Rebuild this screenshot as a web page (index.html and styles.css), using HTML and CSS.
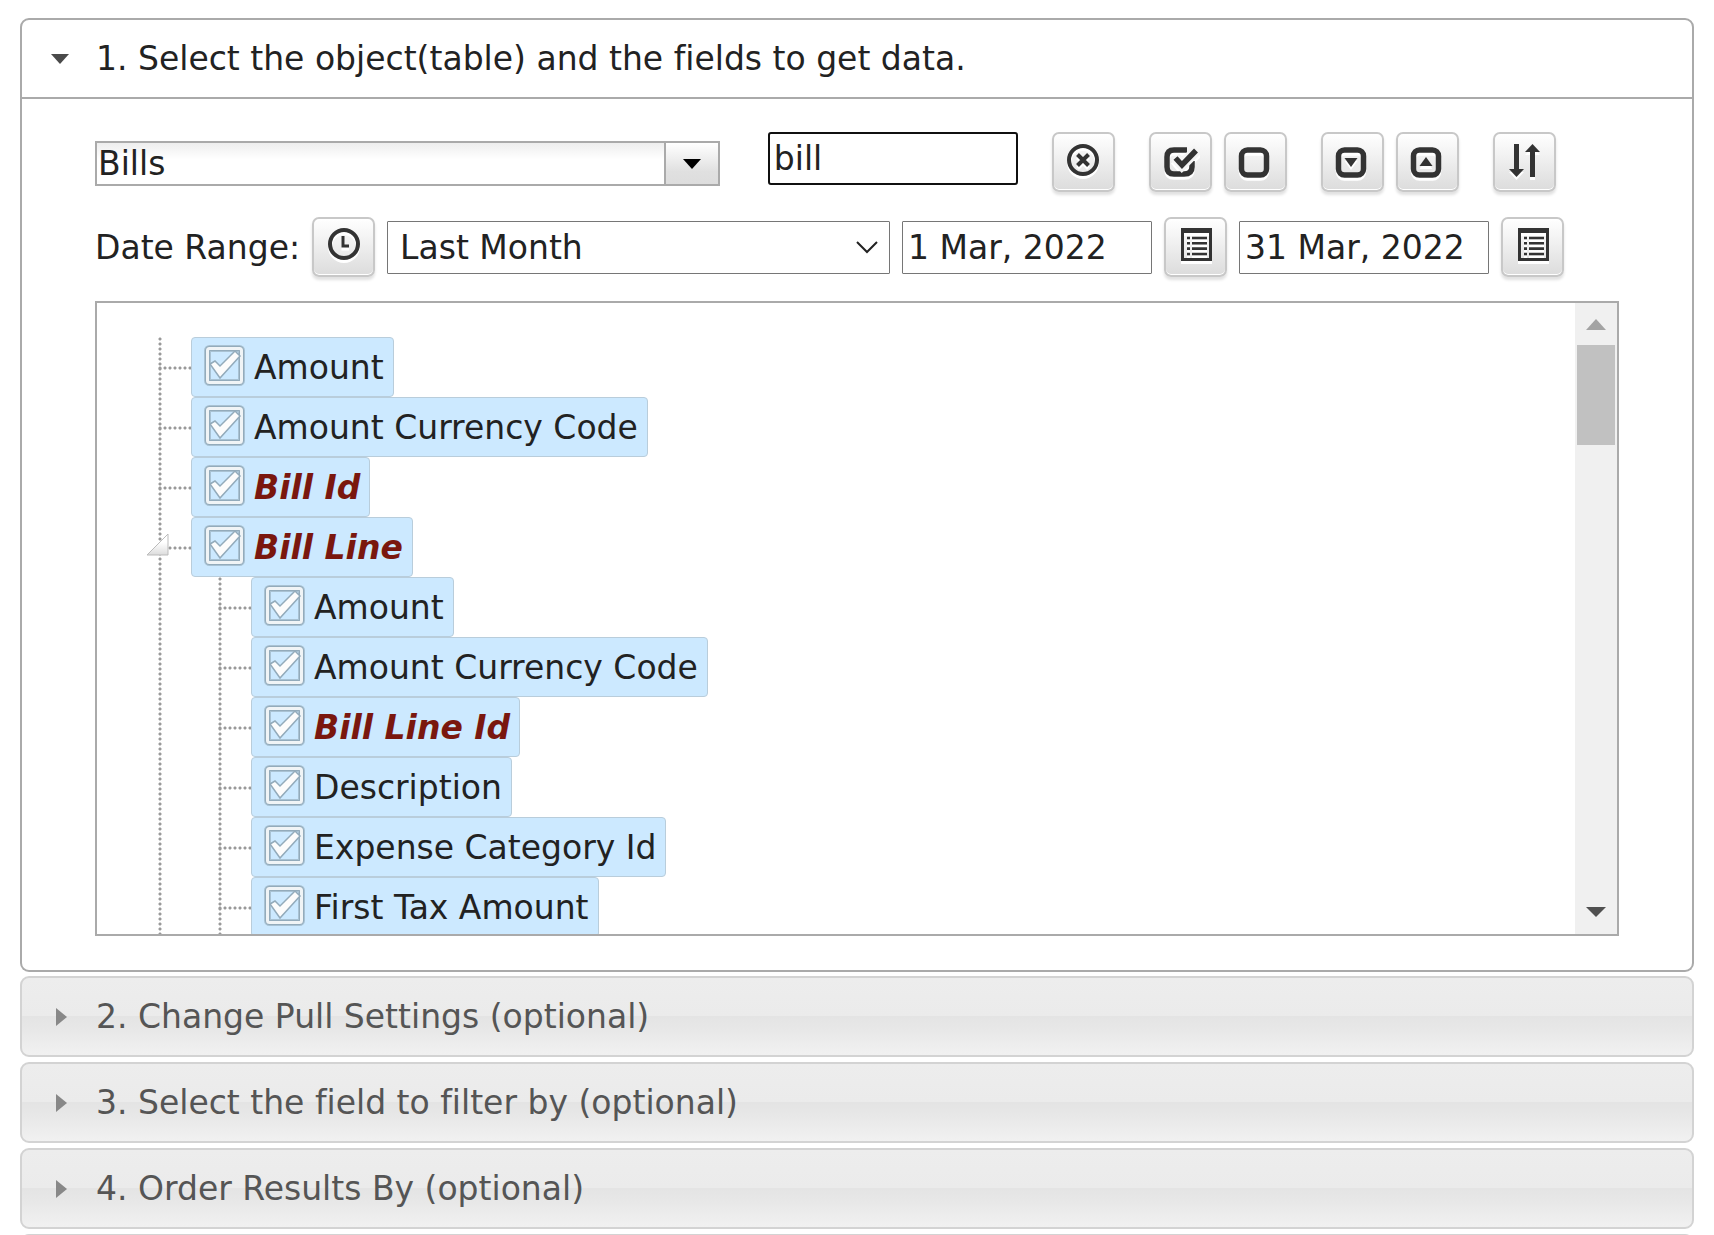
FILE: index.html
```html
<!DOCTYPE html>
<html lang="en">
<head>
    <meta charset="UTF-8">
    <meta name="viewport" content="width=device-width, initial-scale=1.0">
    <title>Pull Data</title>
    <link rel="stylesheet" href="styles.css">
</head>
<body>
    <!-- Shared icons -->
    <svg class="defs" aria-hidden="true">
        <linearGradient id="metal" x1="0" y1="0" x2="0" y2="1">
            <stop offset="0.4" stop-color="#ffffff"/>
            <stop offset="1" stop-color="#dcdcdc"/>
        </linearGradient>
        <symbol id="icon-calendar" viewBox="0 0 40 40">
            <path fill="#333" fill-rule="evenodd" d="M6 1h31v33H6zM9 6v25h25V6z"/>
            <path stroke="#333" stroke-width="2.6" d="M12 11h3M12 16.3h3M12 21.6h3M12 27h3M17 11h15M17 16.3h15M17 21.6h15M17 27h15"/>
        </symbol>
    </svg>

    <!-- Step 1 -->
    <section class="panel">
        <h3><button class="header active" aria-expanded="true">
            <svg class="arrow" viewBox="0 0 20 20" aria-hidden="true"><path fill="#4a4a4a" d="M1 5h18l-9 10z"/></svg>
            1. Select the object(table) and the fields to get data.
        </button></h3>
        <div class="content">
            <div class="row">
                <div class="combo">
                    <input type="text" value="Bills" aria-label="Object">
                    <button aria-label="Show objects"><svg width="20" height="12" viewBox="0 0 20 12"><path d="M1 1h18l-9 10z"/></svg></button>
                </div>
                <input class="textbox search" type="text" value="bill" aria-label="Search fields">
                <button class="btn clear" aria-label="Clear search">
                    <svg viewBox="0 0 40 40"><circle cx="20" cy="18" r="14" fill="none" stroke="#333" stroke-width="4"/><path stroke="#333" stroke-width="4" d="M14.5 12.5l11 11M25.5 12.5l-11 11"/></svg>
                </button>
                <div class="group">
                    <button class="btn" aria-label="Select all">
                        <svg viewBox="0 0 40 40"><path fill="none" stroke="#333" stroke-width="5.5" d="M27 8H14Q7 8 7 15V25Q7 32 14 32H24Q32 32 32 25V19"/><path fill="none" stroke="#f5f5f5" stroke-width="11" d="M15 15l7 8L38 7"/><path fill="none" stroke="#333" stroke-width="5.5" d="M15.500 16l6.500 7L36 8.500"/></svg>
                    </button>
                    <button class="btn" aria-label="Clear all">
                        <svg viewBox="0 0 40 40"><rect x="6.500" y="8" width="25" height="25" rx="6" fill="none" stroke="#333" stroke-width="5.5"/></svg>
                    </button>
                </div>
                <div class="group">
                    <button class="btn" aria-label="Expand all">
                        <svg viewBox="0 0 40 40"><rect x="6.500" y="8" width="25" height="25" rx="6" fill="none" stroke="#333" stroke-width="5.5"/><path fill="#333" d="M12.500 16h13l-6.500 9z"/></svg>
                    </button>
                    <button class="btn" aria-label="Collapse all">
                        <svg viewBox="0 0 40 40"><rect x="6.500" y="8" width="25" height="25" rx="6" fill="none" stroke="#333" stroke-width="5.5"/><path fill="#333" d="M12.500 24h13l-6.500-9z"/></svg>
                    </button>
                </div>
                <button class="btn" aria-label="Sort">
                    <svg viewBox="0 0 40 40"><path fill="#333" d="M10 2h5v25h5l-7.500 8L5 27h5zM26 35V10h-5l7.500-8 7.500 8h-5v25z"/></svg>
                </button>
            </div>

            <div class="row dates">
                <label for="range">Date Range:</label>
                <button class="btn clock" aria-label="Date range presets">
                    <svg viewBox="0 0 40 40"><circle cx="20" cy="17" r="14" fill="none" stroke="#333" stroke-width="4"/><path fill="none" stroke="#333" stroke-width="3" d="M19 9v10h6"/></svg>
                </button>
                <div class="select">
                    <select id="range"><option>Last Month</option></select>
                    <svg viewBox="0 0 22 13" aria-hidden="true"><path fill="none" stroke="#222" stroke-width="2" d="M1 1l10 10L21 1"/></svg>
                </div>
                <input class="textbox" type="text" value="1 Mar, 2022" aria-label="From date">
                <button class="btn" aria-label="Pick from date"><svg><use href="#icon-calendar"/></svg></button>
                <input class="textbox" type="text" value="31 Mar, 2022" aria-label="To date">
                <button class="btn" aria-label="Pick to date"><svg><use href="#icon-calendar"/></svg></button>
            </div>

            <div class="tree">
                <ul>
                    <li><label class="node"><input type="checkbox" checked>Amount</label></li>
                    <li><label class="node"><input type="checkbox" checked>Amount Currency Code</label></li>
                    <li><label class="node match"><input type="checkbox" checked>Bill Id</label></li>
                    <li>
                        <button class="toggle" aria-label="Collapse Bill Line"><svg viewBox="0 0 26 26"><path fill="url(#metal)" stroke="#bbb" d="M23 2v21H2z"/></svg></button>
                        <label class="node match"><input type="checkbox" checked>Bill Line</label>
                        <ul>
                            <li><label class="node"><input type="checkbox" checked>Amount</label></li>
                            <li><label class="node"><input type="checkbox" checked>Amount Currency Code</label></li>
                            <li><label class="node match"><input type="checkbox" checked>Bill Line Id</label></li>
                            <li><label class="node"><input type="checkbox" checked>Description</label></li>
                            <li><label class="node"><input type="checkbox" checked>Expense Category Id</label></li>
                            <li><label class="node"><input type="checkbox" checked>First Tax Amount</label></li>
                        </ul>
                    </li>
                </ul>
                <div class="scrollbar" aria-hidden="true">
                    <svg viewBox="0 0 42 42"><path fill="#a3a3a3" d="M11 27h20L21 16z"/></svg>
                    <div class="thumb"></div>
                    <svg viewBox="0 0 42 42"><path fill="#505050" d="M11 15h20L21 25z"/></svg>
                </div>
            </div>
        </div>
    </section>

    <!-- Steps 2-4 -->
    <h3><button class="header" aria-expanded="false">
        <svg class="arrow" viewBox="0 0 20 20" aria-hidden="true"><path fill="#888" d="M6 1v18l11-9z"/></svg>
        2. Change Pull Settings (optional)
    </button></h3>
    <h3><button class="header" aria-expanded="false">
        <svg class="arrow" viewBox="0 0 20 20" aria-hidden="true"><path fill="#888" d="M6 1v18l11-9z"/></svg>
        3. Select the field to filter by (optional)
    </button></h3>
    <h3><button class="header" aria-expanded="false">
        <svg class="arrow" viewBox="0 0 20 20" aria-hidden="true"><path fill="#888" d="M6 1v18l11-9z"/></svg>
        4. Order Results By (optional)
    </button></h3>
    <div class="header"></div>
</body>
</html>
```

FILE: styles.css
```css
* {
    box-sizing: border-box;
}
body {
    margin: 0;
    padding: 18px 20px 0;
    height: 100vh;
    overflow: hidden;
    background: #fff;
    color: #222;
}
body, button, input, select {
    font-family: Verdana, "DejaVu Sans", sans-serif;
    font-size: 33px;
    font-variant-ligatures: none;
}
h3 {
    margin: 0 0 5px;
    font-weight: normal;
}
button {
    cursor: pointer;
}
.defs {
    position: absolute;
    width: 0;
    height: 0;
}

/* Accordion */
.header {
    display: flex;
    align-items: center;
    gap: 26px;
    width: 100%;
    height: 81px;
    padding: 0 28px;
    border: 2px solid #d3d3d3;
    border-radius: 9px;
    background: linear-gradient(#ededed, #ebebeb 49%, #e4e4e4 50%, #e7e7e7 65%, #f1f1f1);
    color: #555;
    text-align: left;
}
.arrow {
    width: 20px;
    height: 20px;
    flex-shrink: 0;
}
.panel {
    margin-bottom: 4px;
}
.panel h3 {
    margin: 0;
}
.header.active {
    border-color: #aaa;
    border-radius: 9px 9px 0 0;
    background: #fff;
    color: #222;
}
.content {
    padding: 33px 73px 34px;
    border: 2px solid #aaa;
    border-top: 0;
    border-radius: 0 0 9px 9px;
}

/* Toolbar */
.row {
    display: flex;
    align-items: flex-start;
    gap: 34px;
}
.group {
    display: flex;
    gap: 12px;
}
.combo {
    display: flex;
    width: 41%;
    height: 45px;
    margin: 9px 14px 0 0;
    border: 2px solid #aaa;
}
.combo input {
    flex: 1;
    min-width: 0;
    padding: 0 1px;
    border: 0;
    background: linear-gradient(#eee, #fff 40%);
    color: #222;
}
.combo button {
    display: flex;
    align-items: center;
    justify-content: center;
    width: 54px;
    padding: 0;
    border: 0;
    border-left: 2px solid #aaa;
    background: linear-gradient(#fff, #e0e0e0 70%, #ddd);
}
.textbox {
    width: 250px;
    height: 53px;
    padding: 0 5px;
    border: 1px solid #767676;
    border-radius: 1px;
    background: #fff;
    color: #222;
}
.search {
    border: 2px solid #101010;
    border-radius: 3px;
    padding: 0 4px;
    outline: 0;
}
.btn {
    display: flex;
    align-items: center;
    justify-content: center;
    width: 63px;
    height: 60px;
    padding: 0;
    flex-shrink: 0;
    border: 2px solid #c8c8c8;
    border-radius: 7px;
    background: linear-gradient(#fff, #dcdcdc);
    box-shadow: 0 3px 3px rgba(0, 0, 0, 0.12), inset 0 -1px #fff;
}
.btn svg {
    width: 40px;
    height: 40px;
    filter: drop-shadow(0 3px 0 #fff);
}
.dates {
    align-items: center;
    gap: 12px;
    margin-top: 25px;
}
.dates label {
    white-space: nowrap;
}
.select {
    display: grid;
    align-items: center;
    width: 33%;
}
.select select, .select svg {
    grid-area: 1 / 1;
}
.select select {
    width: 100%;
    height: 53px;
    padding: 0 12px;
    appearance: none;
    border: 1px solid #767676;
    border-radius: 1px;
    background: #fff;
    color: #222;
}
.select svg {
    width: 22px;
    height: 13px;
    margin-right: 12px;
    justify-self: end;
    pointer-events: none;
}

/* Field tree */
.tree {
    display: flex;
    justify-content: space-between;
    height: 635px;
    margin-top: 24px;
    overflow: hidden;
    border: 2px solid #aaa;
}
.tree ul {
    margin: 0;
    padding: 0;
    list-style: none;
}
.tree > ul {
    padding: 34px 0 0 61px;
}
.tree li {
    position: relative;
    padding-left: 33px;
    background: radial-gradient(circle at 2px 2px, #999 1px, transparent 2px) 0 0 / 5px 5px repeat-y;
}
.tree li ul {
    padding-left: 27px;
}
/* dotted connector from the trunk to the node */
.tree li::before {
    content: "";
    position: absolute;
    top: 29px;
    left: 0;
    width: 33px;
    height: 4px;
    background: radial-gradient(circle at 2px 2px, #999 1px, transparent 2px) 0 0 / 5px 5px repeat-x;
}
.node {
    display: flex;
    align-items: center;
    gap: 9px;
    width: max-content;
    height: 60px;
    padding: 0 9px 0 12px;
    border: 1px solid #b9cddb;
    border-radius: 4px;
    background: #cce9ff;
}
.match {
    color: #7a170e;
    font-weight: bold;
    font-style: italic;
}
.node input {
    appearance: none;
    width: 41px;
    height: 41px;
    margin: 0 0 4px;
    background: url("data:image/svg+xml,%3Csvg xmlns='http://www.w3.org/2000/svg' viewBox='0 0 41 41'%3E%3Cg fill='none' stroke-linejoin='round'%3E%3Crect x='3.5' y='3.5' width='34' height='34' rx='2' stroke='%23a9c2d3' stroke-width='7'/%3E%3Crect x='3.5' y='3.5' width='34' height='34' rx='2' stroke='%2393abbb' stroke-width='5'/%3E%3Crect x='3.500' y='3.500' width='34' height='34' rx='2' stroke='%23f0f4f6' stroke-width='3'/%3E%3C/g%3E%3Cpath d='M6 19l5-3 5 5L31 6l5 5-20 22z' fill='%23fcfcfc' stroke='%2393abbb' stroke-width='1.5'/%3E%3C/svg%3E");
}
.toggle {
    position: absolute;
    top: 15px;
    left: -13px;
    z-index: 1;
    width: 26px;
    height: 26px;
    padding: 0;
    border: 0;
    background: none;
}
.toggle svg {
    display: block;
}
.scrollbar {
    display: flex;
    flex-direction: column;
    width: 42px;
    background: #f0f0f0;
}
.scrollbar svg {
    height: 42px;
}
.scrollbar .thumb {
    height: 100px;
    margin: 0 2px auto;
    background: #c1c1c1;
}
```
